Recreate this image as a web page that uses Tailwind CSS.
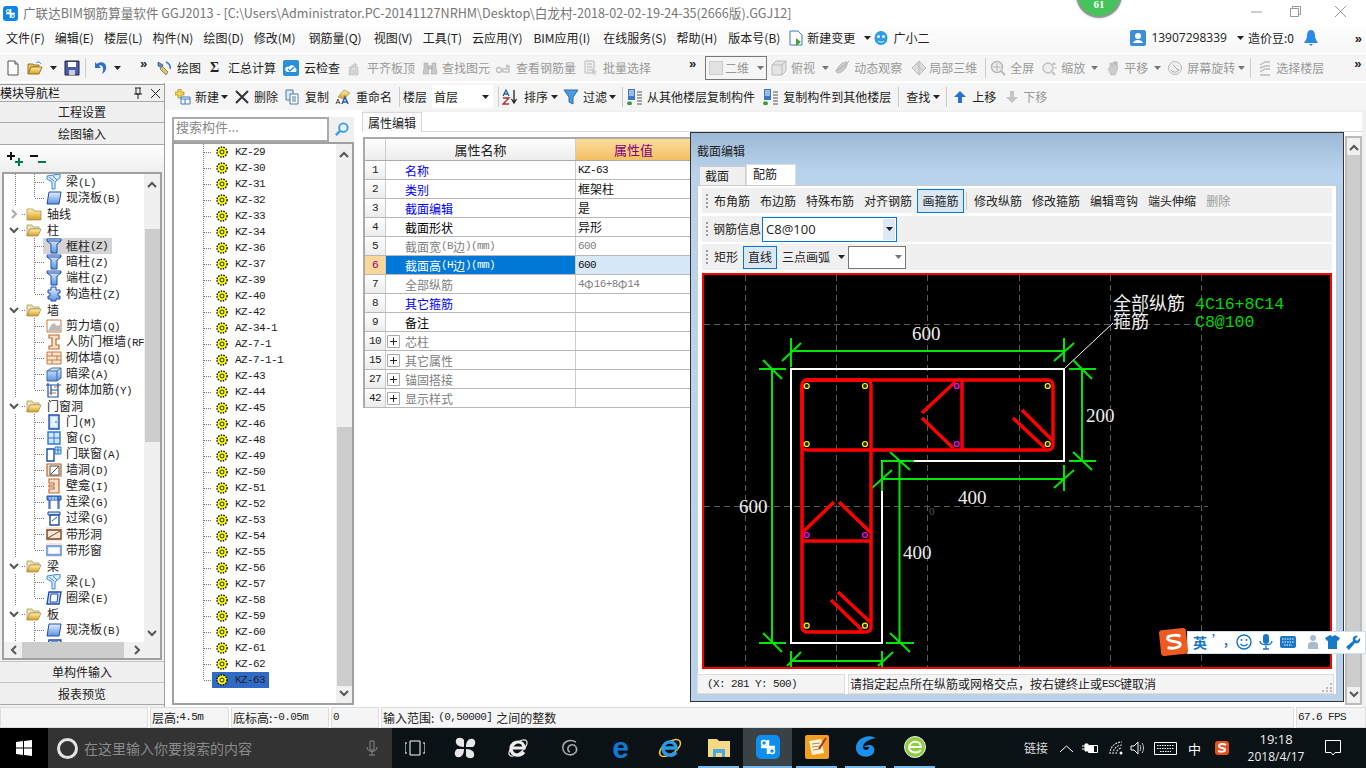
<!DOCTYPE html>
<html lang="zh-CN">
<head>
<meta charset="UTF-8">
<script src="https://cdn.jsdelivr.net/npm/@tailwindcss/browser@4"></script>
<title>GGJ2013</title>
</head>
<body class="w-[1366px] h-[768px] overflow-hidden relative flex flex-col bg-white text-[12px] text-[#222] leading-none font-['Noto_Sans_CJK_SC','Noto_Sans',sans-serif]">

<!-- icon sheet -->
<svg class="absolute w-0 h-0">
  <defs>
    <linearGradient id="gy" x1="0" y1="0" x2="0" y2="1"><stop offset="0" stop-color="#fff3b0"/><stop offset="1" stop-color="#d99a20"/></linearGradient>
    <linearGradient id="gb" x1="0" y1="0" x2="0" y2="1"><stop offset="0" stop-color="#e4f0ff"/><stop offset="1" stop-color="#5b93e0"/></linearGradient>
  </defs>
  <symbol id="c" viewBox="0 0 7 4"><path d="M0 0h7L3.5 4z" fill="#222"/></symbol>
  <symbol id="cg" viewBox="0 0 7 4"><path d="M0 0h7L3.5 4z" fill="#777"/></symbol>
  <symbol id="up" viewBox="0 0 10 7"><path d="M1 6l4-4 4 4" fill="none" stroke="#555" stroke-width="2"/></symbol>
  <symbol id="dn" viewBox="0 0 10 7"><path d="M1 1l4 4 4-4" fill="none" stroke="#555" stroke-width="2"/></symbol>
  <symbol id="lf" viewBox="0 0 7 10"><path d="M6 1L2 5l4 4" fill="none" stroke="#555" stroke-width="2"/></symbol>
  <symbol id="rt" viewBox="0 0 7 10"><path d="M1 1l4 4-4 4" fill="none" stroke="#555" stroke-width="2"/></symbol>
  <!-- toolbar -->
  <symbol id="newdoc" viewBox="0 0 16 16"><path d="M3 1h7l3 3v11H3z" fill="#fff" stroke="#555"/><path d="M10 1v3h3" fill="#ddd" stroke="#555"/></symbol>
  <symbol id="open" viewBox="0 0 16 16"><path d="M1 14V4h5l1 1h5v2H4l-3 7z" fill="#e8c060" stroke="#a07820"/><path d="M1 14l3-7h11l-3 7z" fill="url(#gy)" stroke="#a07820"/><path d="M9 3c2-2 4-1 5 1" fill="none" stroke="#3a78c8"/></symbol>
  <symbol id="save" viewBox="0 0 16 16"><path d="M1 1h14v14H1z" fill="#4a5fb0" stroke="#223"/><path d="M4 2h8v5H4z" fill="#fff"/><path d="M5 10h6v5H5z" fill="#ccd"/></symbol>
  <symbol id="undo" viewBox="0 0 16 16"><path d="M4 3c5-2 9 1 8 6-.5 2-2 4-4 5 1-3 2-6 0-8-1-1-2-1-3 0l2 2H1V2l2 2z" fill="#2e6fc8"/></symbol>
  <symbol id="draw" viewBox="0 0 16 16"><path d="M2 2l5 3-1 3-4-2z" fill="#5c8fd8" stroke="#333" stroke-width=".6"/><path d="M6 6l6 6-2 3-6-6z" fill="#e6c25a" stroke="#555" stroke-width=".6"/><path d="M10 2c3 1 5 4 4 7" fill="none" stroke="#3a78c8" stroke-width="1.5"/></symbol>
  <symbol id="cloud" viewBox="0 0 16 16"><rect x="0" y="0" width="16" height="16" rx="2" fill="#2c8fdb"/><path d="M3 11c-2-2 0-5 3-4 1-3 6-2 6 1 2 0 2 4 0 4H4z" fill="#fff"/><path d="M5 9l2 2 4-4" fill="none" stroke="#2c8fdb" stroke-width="1.4"/></symbol>
  <symbol id="flat" viewBox="0 0 16 16"><path d="M2 8l7-5 3 2-7 5z" fill="#ccc"/><path d="M3 10h5v5H3zM9 7h3v8H9z" fill="#d6d6d6" stroke="#bbb" stroke-width=".6"/></symbol>
  <symbol id="binoc" viewBox="0 0 16 16"><path d="M2 3h4v5l1 6H1l1-6zM10 3h4v5l1 6H9l1-6zM6 6h4v3H6z" fill="#c8c8c8" stroke="#aaa" stroke-width=".6"/></symbol>
  <symbol id="glass" viewBox="0 0 16 16"><circle cx="4" cy="10" r="2.5" fill="none" stroke="#c0c0c0" stroke-width="1.4"/><path d="M11 5l3 1v6h-5c-2 0-2-3 0-3h3V6" fill="none" stroke="#c0c0c0" stroke-width="1.4"/></symbol>
  <symbol id="batch" viewBox="0 0 16 16"><path d="M2 1h9v12H2z" fill="#eee" stroke="#bbb"/><path d="M4 4h5M4 7h5M4 10h5" stroke="#bbb"/><path d="M9 8l5 4-2 1 1 2-1 .6-1-2-2 1z" fill="#ccc"/></symbol>
  <symbol id="cube" viewBox="0 0 16 16"><path d="M1 5l4-4h10v10l-4 4H1z" fill="#e4e4e4" stroke="#bbb"/><path d="M1 5h10v10M11 5l4-4" fill="none" stroke="#bbb"/></symbol>
  <symbol id="orbit" viewBox="0 0 16 16"><path d="M3 13c-1-5 4-11 10-11 1 5-4 11-10 11z" fill="#ccc" stroke="#bbb"/><path d="M1 11c3-1 10-5 14-10" fill="none" stroke="#aaa"/></symbol>
  <symbol id="local" viewBox="0 0 16 16"><path d="M8 1l7 7-7 7-7-7z" fill="#ddd" stroke="#bbb"/><path d="M5 4l7 7M8 1v14" stroke="#bbb"/></symbol>
  <symbol id="zf" viewBox="0 0 16 16"><circle cx="7" cy="7" r="5.5" fill="#eee" stroke="#b5b5b5" stroke-width="1.4"/><path d="M7 3v8M3 7h8" stroke="#b5b5b5"/><path d="M11 11l4 4" stroke="#b5b5b5" stroke-width="2"/></symbol>
  <symbol id="zm" viewBox="0 0 16 16"><circle cx="6" cy="8" r="5" fill="#eee" stroke="#c0c0c0" stroke-width="1.4"/><path d="M10 12l3 3" stroke="#c0c0c0" stroke-width="2"/><path d="M12 2v3M10 4h4M11 8h4" stroke="#bbb"/></symbol>
  <symbol id="pan" viewBox="0 0 16 16"><path d="M5 7V3l2 0v3l1-4h2l0 4 1-2 2 1-1 6-2 4H6L3 9z" fill="#ccc" stroke="#b5b5b5" stroke-width=".6"/><path d="M11 1v4M9 3h4" stroke="#aaa"/></symbol>
  <symbol id="rot" viewBox="0 0 16 16"><circle cx="8" cy="8" r="6.5" fill="#eee" stroke="#bbb"/><path d="M4 10c2 3 7 3 8-1M6 5l5 5" fill="none" stroke="#aaa"/></symbol>
  <symbol id="floor" viewBox="0 0 16 16"><path d="M3 5l5-3h5M3 8l5-2h5M3 12l5-3h5M3 15h10" fill="none" stroke="#bbb" stroke-width="1.4"/></symbol>
  <symbol id="new" viewBox="0 0 16 16"><path d="M3 0h3v3h3v3H6v3H3V6H0V3h3z" fill="#f3d34a" stroke="#997a10" stroke-width=".6"/><path d="M6 8h9v7H6z" fill="#fff" stroke="#3a78c8"/><path d="M6 10h9M10 10v5" stroke="#3a78c8"/></symbol>
  <symbol id="xx" viewBox="0 0 16 16"><path d="M2 2l12 12M14 2L2 14" stroke="#333" stroke-width="2"/></symbol>
  <symbol id="copy" viewBox="0 0 16 16"><path d="M2 1h7v10H2z" fill="#dce9f8" stroke="#4a78b0"/><path d="M6 5h8v10H6z" fill="#fff" stroke="#4a78b0"/><path d="M8 8h4M8 10h4M8 12h4" stroke="#4a78b0"/></symbol>
  <symbol id="filter" viewBox="0 0 16 16"><path d="M1 1h14L10 8v7l-4-2V8z" fill="#4a9be0" stroke="#2a6ab0"/></symbol>
  <symbol id="cfrom" viewBox="0 0 16 16"><path d="M1 0h7v11H1z" fill="#3a78c8"/><path d="M2 2h5M2 4h5M2 6h5" stroke="#fff"/><path d="M1 13h3v3H1zM0 14h5" fill="#3a9a30" stroke="#3a9a30"/><path d="M10 3h5M10 6h5M10 9h5M10 12h5M10 15h5" stroke="#555"/></symbol>
  <symbol id="mup" viewBox="0 0 16 16"><path d="M8 2l6 6h-4v6H6V8H2z" fill="#2a72c8"/></symbol>
  <symbol id="mdn" viewBox="0 0 16 16"><path d="M8 14l6-6h-4V2H6v6H2z" fill="#c4c4c4"/></symbol>
  <symbol id="search" viewBox="0 0 16 16"><circle cx="10" cy="6" r="4.500" fill="#e8f4ff" stroke="#3a9be0" stroke-width="2"/><path d="M6.500 9.500L2 14" stroke="#3a9be0" stroke-width="2.500"/></symbol>
  <!-- tree -->
  <symbol id="fo" viewBox="0 0 16 14"><path d="M1 13V2h5l1 2h6v2H4l-3 7z" fill="#f2e3b0" stroke="#a08a50" stroke-width=".7"/><path d="M1 13l3-7h11l-3 7z" fill="url(#gy)" stroke="#a08a50" stroke-width=".7"/></symbol>
  <symbol id="fc" viewBox="0 0 16 14"><path d="M1 13V2h6l1 2h7v9z" fill="url(#gy)" stroke="#a08a50" stroke-width=".7"/></symbol>
  <symbol id="col" viewBox="0 0 16 16"><path d="M1 1h14v2l-4 3v9H5V6L1 3z" fill="url(#gb)" stroke="#1d4fa8"/><path d="M1 3h14" stroke="#1d4fa8"/></symbol>
  <symbol id="gzz" viewBox="0 0 16 16"><path d="M5 1h5v3h4v3h-2v3h2v3h-4v2H5v-2H2v-3h2V7H2V4h3z" fill="url(#gb)" stroke="#1d4fa8"/></symbol>
  <symbol id="beam" viewBox="0 0 16 16"><path d="M1 2l13-2v4l-5 4v7H6V8L1 5z" fill="#dcecff" stroke="#3a88d8"/><path d="M3 3l5 4M7 2l4 4" stroke="#3a88d8"/></symbol>
  <symbol id="slab" viewBox="0 0 16 16"><path d="M3 2h12l-2 12H1z" fill="url(#gb)" stroke="#1d4fa8"/></symbol>
  <symbol id="ql" viewBox="0 0 16 16"><path d="M3 2h12l-2 12H1z" fill="#cfe2fa" stroke="#1d4fa8" stroke-width="1.400"/><path d="M5 4h7l-1 8H4z" fill="#fff" stroke="#1d4fa8"/></symbol>
  <symbol id="sw" viewBox="0 0 16 16"><path d="M1 2h14v12H1z" fill="#fff" stroke="#c87840"/><path d="M2 13l3-6 3-2 3 3 3-1v6z" fill="#bbb"/></symbol>
  <symbol id="rf" viewBox="0 0 16 16"><path d="M3 1h10v4h-3v6h3v4H3v-3h3V4H3z" fill="#f5e0cc" stroke="#c06a30" stroke-width="1.200"/></symbol>
  <symbol id="brick" viewBox="0 0 16 16"><path d="M1 2h14v12H1z" fill="#f8e4d0" stroke="#c87840"/><path d="M1 6h14M1 10h14M6 2v4M11 6v4M6 10v4" stroke="#c87840"/></symbol>
  <symbol id="anl" viewBox="0 0 16 16"><path d="M1 5l5-3h9v10l-4 3H1z" fill="url(#gb)" stroke="#3a6aa8"/><path d="M1 5h10v10M11 5l4-3" fill="none" stroke="#3a6aa8"/></symbol>
  <symbol id="jj" viewBox="0 0 16 16"><path d="M0 3h15M2 1v14h10V1M12 8H5v5M5 3v5" fill="none" stroke="#1d4fa8" stroke-width="1.200"/><path d="M8 5h5M3 11h7" stroke="#c06a30"/></symbol>
  <symbol id="door" viewBox="0 0 16 16"><path d="M3 1h10v14H3z" fill="#bcd8f8" stroke="#1d4fa8" stroke-width="1.400"/><path d="M5 3h6v10H5z" fill="#e8f2ff"/><circle cx="10" cy="8" r=".8" fill="#1d4fa8"/></symbol>
  <symbol id="win" viewBox="0 0 16 16"><path d="M2 2h12v12H2z" fill="#d2e6fb" stroke="#2a78d8" stroke-width="1.400"/><path d="M8 2v12M2 8h12" stroke="#2a78d8"/></symbol>
  <symbol id="dlc" viewBox="0 0 16 16"><path d="M1 3h7v12H1z" fill="#fff" stroke="#1d4fa8" stroke-width="1.400"/><path d="M9 1h6v7H9z" fill="#cfe2fa" stroke="#2a78d8"/><path d="M12 1v7M9 4h6" stroke="#2a78d8"/></symbol>
  <symbol id="hole" viewBox="0 0 16 16"><path d="M1 2h14v12H1z" fill="#f8e4d0" stroke="#b06a38" stroke-width="1.200"/><path d="M4 4h9v9H4z" fill="#fff" stroke="#555"/><path d="M4 13l9-9" stroke="#555"/></symbol>
  <symbol id="nic" viewBox="0 0 16 16"><path d="M3 1h10v14H3v-4h5V9H3V7h5V5H3z" fill="#f5e0cc" stroke="#c06a30" stroke-width="1.200"/></symbol>
  <symbol id="ll" viewBox="0 0 16 16"><path d="M1 2h14v4H1z" fill="#5b93e0" stroke="#1d4fa8"/><path d="M4 2v13M12 2v13M3 6v9M13 6v9" stroke="#1d4fa8"/><path d="M4 3v3M7 3v3M10 3v3" stroke="#fff"/></symbol>
  <symbol id="gl" viewBox="0 0 16 16"><path d="M2 2h12v3H2z" fill="#cfe2fa" stroke="#1d4fa8"/><path d="M4 5h9v10H4z" fill="#fff" stroke="#1d4fa8" stroke-width="1.400"/><path d="M6 11l5-4" stroke="#1d4fa8"/></symbol>
  <symbol id="bh" viewBox="0 0 16 16"><path d="M0 1h16v14H0z" fill="#fbe4dc"/><path d="M1 4h14v9H1z" fill="#f6e6d8" stroke="#7a4a20" stroke-width="1.400"/><path d="M2 12l12-7" stroke="#7a4a20"/></symbol>
  <symbol id="bc" viewBox="0 0 16 16"><path d="M0 1h16v14H0z" fill="#fbe4dc"/><path d="M1 4h14v9H1z" fill="#dce9fb" stroke="#5b8be0" stroke-width="1.400"/><path d="M3 6h10v5H3z" fill="#fff"/></symbol>
  <symbol id="gear" viewBox="0 0 12 12"><circle cx="6" cy="6" r="5" fill="#ff0" stroke="#111" stroke-width="1.500" stroke-dasharray="1.500 1.200"/><circle cx="6" cy="6" r="3.800" fill="#ff0"/><circle cx="6" cy="6" r="2" fill="#ff0" stroke="#222"/></symbol>
</svg>

<!-- title bar -->
<div class="h-[23px] flex items-center shrink-0 bg-white relative">
  <svg class="w-[15px] h-[15px] ml-[3px] mt-1" viewBox="0 0 15 15"><rect width="15" height="15" rx="3" fill="#0e86e8"/><path d="M7.500 3v9M3 7.500h9" stroke="#fff" stroke-width="1.600"/><circle cx="5" cy="5" r="1.500" fill="none" stroke="#fff"/><circle cx="10" cy="10" r="1.500" fill="none" stroke="#fff"/></svg>
  <span class="ml-[5px] mt-1 text-[#767676] text-[12.6px] whitespace-nowrap">广联达BIM钢筋算量软件 GGJ2013 - [C:\Users\Administrator.PC-20141127NRHM\Desktop\白龙村-2018-02-02-19-24-35(2666版).GGJ12]</span>
  <div class="ml-auto flex items-center">
    <svg class="w-[11px] h-[11px]" viewBox="0 0 11 11"><path d="M0 6h11" stroke="#999"/></svg>
    <svg class="w-[11px] h-[11px] ml-[28px]" viewBox="0 0 11 11"><path d="M.5 2.500h8v8h-8zM2.500 2.500V.5h8v8h-2" fill="none" stroke="#999"/></svg>
    <svg class="w-[11px] h-[11px] ml-[34px] mr-[20px]" viewBox="0 0 11 11"><path d="M0 0l11 11M11 0L0 11" stroke="#999"/></svg>
  </div>
</div>
<!-- green badge over the window edge -->
<div class="absolute left-[1076px] top-[-28px] w-[46px] h-[46px] rounded-full bg-[#45c35c] border-2 border-[#8f9a92] shadow flex items-end justify-center pb-[6px] text-white font-bold text-[11px] font-['Liberation_Serif',serif]">61</div>

<!-- menu bar -->
<div class="h-[30px] flex items-center shrink-0 pl-[6px] gap-[10px] bg-gradient-to-b from-white to-[#f6f6f6] text-[#222] whitespace-nowrap">
  <span>文件(F)</span><span>编辑(E)</span><span>楼层(L)</span><span>构件(N)</span><span>绘图(D)</span><span>修改(M)</span><span class="ml-[3px]">钢筋量(Q)</span><span class="ml-[2px]">视图(V)</span><span>工具(T)</span><span>云应用(Y)</span><span class="ml-px">BIM应用(I)</span><span class="ml-[3px]">在线服务(S)</span><span>帮助(H)</span><span class="ml-px">版本号(B)</span>
  <svg class="w-4 h-4 shrink-0 -ml-[2px]" viewBox="0 0 16 16"><path d="M2 1h8l4 4v10H2z" fill="#fff" stroke="#3a78c8"/><path d="M8 8l5 4-5 4z" fill="#4aa030"/></svg>
  <span class="-ml-[7px]">新建变更</span>
  <svg class="w-[7px] h-1 -ml-[1px]"><use href="#c"/></svg>
  <svg class="w-4 h-4 shrink-0 -ml-[8px]" viewBox="0 0 16 16"><ellipse cx="8" cy="8" rx="6.500" ry="7" fill="#2a9ce8"/><circle cx="5.500" cy="6.500" r="1.500" fill="#fff"/><circle cx="10.500" cy="6.500" r="1.500" fill="#fff"/><path d="M5 11c2 1.500 4 1.500 6 0" fill="none" stroke="#fff"/></svg>
  <span class="-ml-[6px]">广小二</span>
  <svg class="w-4 h-4 ml-[191px] shrink-0" viewBox="0 0 16 16"><rect width="16" height="16" rx="2" fill="#3a8fd8"/><circle cx="8" cy="6" r="3" fill="#fff"/><path d="M3 13c1-4 9-4 10 0z" fill="#fff"/></svg>
  <span class="-ml-[5px] font-['Open_Sans','Noto_Sans',sans-serif]">13907298339</span>
  <svg class="w-[7px] h-1"><use href="#c"/></svg>
  <span class="-ml-[6px]">造价豆:0</span>
  <svg class="w-[14px] h-[16px]" viewBox="0 0 14 16"><path d="M7 0c3 0 4 3 4 6 0 3 2 5 3 7H0c1-2 3-4 3-7 0-3 1-6 4-6z" fill="#2a8ae8"/><path d="M5 14h4l-2 2z" fill="#2a8ae8"/></svg>
  <span class="ml-auto mr-[4px] font-bold text-[13px] font-['Liberation_Sans']">»</span>
</div>

<!-- toolbar one -->
<div class="h-[27px] flex items-center shrink-0 bg-[#f5f5f5] whitespace-nowrap text-[#222] mt-[1px]">
  <svg class="w-4 h-4 ml-[5px] shrink-0"><use href="#newdoc"/></svg>
  <svg class="w-4 h-4 ml-[6px] shrink-0"><use href="#open"/></svg>
  <svg class="w-[7px] h-1 ml-[7px] shrink-0"><use href="#c"/></svg>
  <svg class="w-4 h-4 ml-[7px] shrink-0"><use href="#save"/></svg>
  <i class="w-px h-5 ml-[5px] bg-[#ccc] shrink-0"></i>
  <svg class="w-4 h-4 ml-[8px] shrink-0"><use href="#undo"/></svg>
  <svg class="w-[7px] h-1 ml-[4px] shrink-0"><use href="#c"/></svg>
  <b class="w-2 ml-[19px] -mt-2 font-['Liberation_Sans'] text-[13px]">»</b>
  <svg class="w-4 h-4 ml-[8px] shrink-0"><use href="#draw"/></svg>
  <span class="ml-[5px]">绘图</span>
  <b class="w-[10px] ml-[9px] text-[14px] font-['Liberation_Serif']">Σ</b>
  <span class="ml-[8px]">汇总计算</span>
  <svg class="w-4 h-4 ml-[7px] shrink-0"><use href="#cloud"/></svg>
  <span class="ml-[5px]">云检查</span>
  <svg class="w-4 h-4 ml-[6px] shrink-0"><use href="#flat"/></svg>
  <span class="ml-[5px] text-[#999]">平齐板顶</span>
  <svg class="w-4 h-4 ml-[7px] shrink-0"><use href="#binoc"/></svg>
  <span class="ml-[4px] text-[#999]">查找图元</span>
  <svg class="w-4 h-4 ml-[5px] shrink-0"><use href="#glass"/></svg>
  <span class="ml-[5px] text-[#999]">查看钢筋量</span>
  <svg class="w-4 h-4 ml-[7px] shrink-0"><use href="#batch"/></svg>
  <span class="ml-[4px] text-[#999]">批量选择</span>
  <b class="w-2 ml-[38px] -mt-2 font-['Liberation_Sans'] text-[13px]">»</b>
  <div class="w-[62px] h-6 ml-[8px] border border-[#777] flex items-center pl-[3px] text-[#999] shrink-0">
    <i class="w-[14px] h-[14px] bg-[#e2e2e2] border border-[#ccc]"></i><span class="ml-[2px]">二维</span>
    <svg class="w-[7px] h-1 ml-[8px]"><use href="#cg"/></svg>
  </div>
  <svg class="w-4 h-4 ml-[4px] shrink-0"><use href="#cube"/></svg>
  <span class="ml-[4px] text-[#999]">俯视</span>
  <svg class="w-[7px] h-1 ml-[7px] shrink-0"><use href="#cg"/></svg>
  <svg class="w-4 h-4 ml-[5px] shrink-0"><use href="#orbit"/></svg>
  <span class="ml-[4px] text-[#999]">动态观察</span>
  <svg class="w-4 h-4 ml-[9px] shrink-0"><use href="#local"/></svg>
  <span class="ml-[2px] text-[#999]">局部三维</span>
  <i class="w-px h-5 ml-[8px] bg-[#ccc] shrink-0"></i>
  <svg class="w-4 h-4 ml-[4px] shrink-0"><use href="#zf"/></svg>
  <span class="ml-[4px] text-[#999]">全屏</span>
  <svg class="w-4 h-4 ml-[8px] shrink-0"><use href="#zm"/></svg>
  <span class="ml-[3px] text-[#999]">缩放</span>
  <svg class="w-[7px] h-1 ml-[6px] shrink-0"><use href="#cg"/></svg>
  <svg class="w-4 h-4 ml-[7px] shrink-0"><use href="#pan"/></svg>
  <span class="ml-[3px] text-[#999]">平移</span>
  <svg class="w-[7px] h-1 ml-[6px] shrink-0"><use href="#cg"/></svg>
  <svg class="w-4 h-4 ml-[6px] shrink-0"><use href="#rot"/></svg>
  <span class="ml-[4px] text-[#999]">屏幕旋转</span>
  <svg class="w-[7px] h-1 ml-[3px] shrink-0"><use href="#cg"/></svg>
  <i class="w-px h-5 ml-[5px] bg-[#ccc] shrink-0"></i>
  <svg class="w-4 h-4 ml-[6px] shrink-0"><use href="#floor"/></svg>
  <span class="ml-[3px] text-[#999]">选择楼层</span>
  <b class="w-2 ml-[30px] -mt-2 font-['Liberation_Sans'] text-[13px]">»</b>
</div>

<!-- work area -->
<div class="flex-1 min-h-0 flex mt-[2px]">

  <!-- module navigator -->
  <div class="w-[165px] shrink-0 flex flex-col pt-px pb-[2px] bg-[#f0f0f0] border-r border-[#a0a0a0]">
    <div class="h-[17px] flex items-center border-t border-[#999] shrink-0 text-[#111]">
      <span>模块导航栏</span>
      <svg class="w-[10px] h-3 ml-auto" viewBox="0 0 10 12"><path d="M2 1h6M3 1v6h4V1M1 7h8M5 7v5" fill="none" stroke="#222"/></svg>
      <svg class="w-[9px] h-[9px] ml-[8px] mr-[4px]" viewBox="0 0 9 9"><path d="M0 0l9 9M9 0L0 9" stroke="#222"/></svg>
    </div>
    <div class="h-[22px] shrink-0 flex items-center justify-center border-y border-[#a8a8a8]">工程设置</div>
    <div class="h-[22px] shrink-0 flex items-center justify-center border-b border-[#a8a8a8]">绘图输入</div>
    <div class="h-[27px] shrink-0 flex items-center pl-[7px] gap-[6px] bg-gradient-to-b from-white to-[#eee]">
      <svg class="w-4 h-[14px]" viewBox="0 0 16 14"><path d="M0 4h8M4 0v8" stroke="#111" stroke-width="2"/><path d="M8 10h8M12 6v8" stroke="#074" stroke-width="2"/></svg>
      <svg class="w-4 h-[14px] ml-px" viewBox="0 0 16 14"><path d="M0 4h8" stroke="#111" stroke-width="2"/><path d="M8 10h8" stroke="#074" stroke-width="2"/></svg>
    </div>
    <div class="flex-1 min-h-0 mx-[2px] border-2 border-[#a0a0a0] bg-white flex flex-col">
      <div class="flex-1 min-h-0 flex">
        <div id="tree" class="flex-1 min-w-0 overflow-hidden whitespace-nowrap -ml-px"></div>
        <div class="w-[16px] shrink-0 bg-[#f0f0f0] flex flex-col items-center">
          <svg class="w-[10px] h-[7px] mt-[7px] shrink-0"><use href="#up"/></svg>
          <div class="w-[15px] h-[213px] mt-[41px] bg-[#cdcdcd] shrink-0"></div>
          <svg class="w-[10px] h-[7px] mt-auto mb-[5px] shrink-0"><use href="#dn"/></svg>
        </div>
      </div>
      <div class="h-[16px] shrink-0 bg-[#f0f0f0] flex items-center">
        <svg class="w-[7px] h-[10px] ml-[6px]"><use href="#lf"/></svg>
        <div class="w-[102px] h-full ml-[5px] bg-[#cdcdcd]"></div>
        <svg class="w-[7px] h-[10px] ml-[10px]"><use href="#rt"/></svg>
      </div>
    </div>
    <div class="h-[22px] shrink-0 mt-px flex items-center justify-center border-y border-[#c4c4c4]">单构件输入</div>
    <div class="h-[22px] shrink-0 flex items-center justify-center border-b border-[#a8a8a8]">报表预览</div>
  </div>

  <div class="flex-1 min-w-0 flex flex-col">
    <!-- toolbar two -->
    <div class="h-[27px] shrink-0 flex items-center bg-[#f5f5f5] whitespace-nowrap">
      <svg class="w-4 h-4 ml-[10px] shrink-0"><use href="#new"/></svg>
      <span class="ml-[4px]">新建</span>
      <svg class="w-[7px] h-1 ml-[2px] shrink-0"><use href="#c"/></svg>
      <svg class="w-4 h-4 ml-[6px] shrink-0"><use href="#xx"/></svg>
      <span class="ml-[4px]">删除</span>
      <svg class="w-4 h-4 ml-[6px] shrink-0"><use href="#copy"/></svg>
      <span class="ml-[5px]">复制</span>
      <svg class="w-4 h-4 ml-[6px] shrink-0" viewBox="0 0 16 16"><path d="M3 8l6-7 6 3-6 6z" fill="url(#gy)" stroke="#997a30" stroke-width=".6"/><path d="M1 15l2-5 2 5M2 13.500h2" fill="none" stroke="#555"/><path d="M7 15l3-7 3 7M8 13h4" fill="none" stroke="#2c5ca8" stroke-width="1.500"/></svg>
      <span class="ml-[5px]">重命名</span>
      <i class="w-px h-5 ml-[7px] bg-[#ccc] shrink-0"></i>
      <span class="ml-[3px]">楼层</span>
      <div class="w-[61px] h-[23px] ml-[5px] bg-white flex items-center pl-[2px] pr-[4px] shrink-0">首层<svg class="w-[7px] h-1 ml-auto"><use href="#c"/></svg></div>
      <i class="w-px h-5 ml-[5px] bg-[#ccc] shrink-0"></i>
      <svg class="w-4 h-4 ml-[3px] shrink-0" viewBox="0 0 16 16"><path d="M1 7l3-6 3 6M2 5h4" fill="none" stroke="#2c5ca8" stroke-width="1.300"/><path d="M1 9h6l-6 6h6" fill="none" stroke="#b03030" stroke-width="1.300"/><path d="M12 1v12M9.500 10l2.500 4 2.500-4" fill="none" stroke="#222" stroke-width="1.300"/></svg>
      <span class="ml-[6px]">排序</span>
      <svg class="w-[7px] h-1 ml-[3px] shrink-0"><use href="#c"/></svg>
      <svg class="w-4 h-4 ml-[5px] shrink-0"><use href="#filter"/></svg>
      <span class="ml-[4px]">过滤</span>
      <svg class="w-[7px] h-1 ml-[2px] shrink-0"><use href="#c"/></svg>
      <i class="w-px h-5 ml-[6px] bg-[#ccc] shrink-0"></i>
      <svg class="w-4 h-4 ml-[4px] shrink-0"><use href="#cfrom"/></svg>
      <span class="ml-[4px]">从其他楼层复制构件</span>
      <svg class="w-4 h-4 ml-[8px] shrink-0"><use href="#cfrom"/></svg>
      <span class="ml-[4px]">复制构件到其他楼层</span>
      <i class="w-px h-5 ml-[7px] bg-[#ccc] shrink-0"></i>
      <span class="ml-[7px]">查找</span>
      <svg class="w-[7px] h-1 ml-[3px] shrink-0"><use href="#c"/></svg>
      <i class="w-px h-5 ml-[6px] bg-[#ccc] shrink-0"></i>
      <svg class="w-4 h-4 ml-[5px] shrink-0"><use href="#mup"/></svg>
      <span class="ml-[4px]">上移</span>
      <svg class="w-4 h-4 ml-[8px] shrink-0"><use href="#mdn"/></svg>
      <span class="ml-[3px] text-[#999]">下移</span>
    </div>

    <div class="flex-1 min-h-0 flex">
      <!-- component list -->
      <div class="w-[189px] shrink-0 pl-[7px] pt-[7px] pb-[2px] flex flex-col">
        <div class="h-[25px] shrink-0 flex bg-[#f0f0f0]">
          <div class="w-[157px] border-2 border-[#aaa] bg-white flex items-center pl-[2px] pb-[6px] text-[13px] text-[#888]">搜索构件...</div>
          <svg class="w-[15px] h-[15px] ml-[5px] mt-[5px]"><use href="#search"/></svg>
        </div>
        <div class="flex-1 min-h-0 border-2 border-[#a0a0a0] bg-white flex">
          <div id="kz" class="flex-1 min-w-0 overflow-hidden"></div>
          <div class="w-[16px] shrink-0 bg-[#f0f0f0] flex flex-col items-center">
            <svg class="w-[10px] h-[7px] mt-[7px] shrink-0"><use href="#up"/></svg>
            <div class="w-[15px] h-[259px] mt-[269px] bg-[#cdcdcd] shrink-0"></div>
            <svg class="w-[10px] h-[7px] mt-auto mb-[6px] shrink-0"><use href="#dn"/></svg>
          </div>
        </div>
      </div>
      <!-- property editor -->
      <div class="flex-1 min-w-0 pl-[8px] flex flex-col">
        <div class="h-[22px] shrink-0 flex items-end border-t-2 border-[#f0f0f0]">
          <div class="w-[60px] h-[20px] flex items-center justify-center bg-[#fafafa] border border-b-0 border-[#d8d8d8]">属性编辑</div>
          <div class="flex-1 border-b border-[#d8d8d8]"></div>
        </div>
        <div class="flex-1 min-h-0 flex">
          <div id="props" class="w-[328px] mt-[5px] ml-px self-start border-t-2 border-l-2 border-[#aaa]"></div>
          <div class="ml-auto w-[17px] mt-[4px] mb-[2px] border-2 border-[#bbb] bg-[#f0f0f0] flex flex-col items-center">
            <svg class="w-[10px] h-[7px] mt-[6px] shrink-0"><use href="#up"/></svg>
            <div class="flex-1 w-full mt-[4px] mb-[4px] bg-[#cdcdcd]"></div>
            <svg class="w-[10px] h-[7px] mb-[5px] shrink-0"><use href="#dn"/></svg>
          </div>
        </div>
      </div>
      <div class="w-[4px] shrink-0 bg-[#f0f0f0]"></div>
    </div>
  </div>
</div>

<!-- status bar -->
<div class="h-[21px] shrink-0 flex gap-[2px] bg-white">
  <div class="w-[148px] bg-[#f5f5f5] border border-[#ddd]"></div>
  <div class="w-[79px] bg-[#f5f5f5] border border-[#ddd] flex items-center pl-px">层高:<span class="font-['Liberation_Mono'] text-[11px] tracking-[-0.6px]">4.5m</span></div>
  <div class="w-[98px] bg-[#f5f5f5] border border-[#ddd] flex items-center pl-px">底标高:<span class="font-['Liberation_Mono'] text-[11px] tracking-[-0.6px]">-0.05m</span></div>
  <div class="w-[48px] bg-[#f5f5f5] border border-[#ddd] flex items-center pl-px font-['Liberation_Mono'] text-[11px]">0</div>
  <div class="flex-1 bg-[#f5f5f5] border border-[#ddd] flex items-center pl-px">输入范围: <span class="font-['Liberation_Mono'] text-[11px] tracking-[-0.6px] mx-[4px]">(0,50000]</span>之间的整数</div>
  <div class="w-[70px] bg-[#f5f5f5] border border-[#ddd] flex items-center pl-px font-['Liberation_Mono'] text-[11px] tracking-[-0.6px]">67.6 FPS</div>
</div>

<!-- taskbar -->
<div class="h-[40px] shrink-0 flex items-center bg-[#0b1216] text-white">
  <div class="w-[48px] h-full bg-black flex items-center justify-center">
    <svg class="w-4 h-4" viewBox="0 0 16 16"><path d="M0 2l7-1v6.500H0zM8 1l8-1v7.500H8zM0 8.500h7V15l-7-1zM8 8.500h8V16l-8-1z" fill="#fff"/></svg>
  </div>
  <div class="w-[344px] h-full bg-[#333] flex items-center">
    <i class="w-[21px] h-[21px] ml-[9px] rounded-full border-[3px] border-[#e4e4e4]"></i>
    <span class="ml-[6px] text-[14px] text-[#8a8a8a]">在这里输入你要搜索的内容</span>
    <svg class="w-[12px] h-[16px] ml-auto mr-[14px]" viewBox="0 0 12 16"><path d="M4 1h4v9H4zM1 7c0 6 10 6 10 0M6 12v3M3 15h6" fill="none" stroke="#888"/></svg>
  </div>
  <div class="w-[46px] h-full flex items-center justify-center"><svg class="w-5 h-4" viewBox="0 0 20 16"><path d="M5 1h10v14H5zM2 3H0v10h2M18 3h2v10h-2" fill="none" stroke="#fff"/></svg></div>
  <div class="w-[54px] h-full flex items-center justify-center"><svg class="w-[22px] h-[22px]" viewBox="0 0 22 22"><path d="M10 10C4 10 1 7 2 3c1-3 6-3 8 0zM12 10c0-6 3-9 7-8 3 1 3 6 0 8zM12 12c6 0 9 3 8 7-1 3-6 3-8 0zM10 12c0 6-3 9-7 8-3-1-3-6 0-8z" fill="#e8e8e8"/></svg></div>
  <div class="w-[51px] h-full flex items-center justify-center"><svg class="w-[24px] h-[24px]" viewBox="0 0 24 24"><ellipse cx="12" cy="12" rx="11" ry="5" transform="rotate(-40 12 12)" fill="none" stroke="#eee" stroke-width="1.200"/><path d="M5 12h13c0-8-12-8-13 0 0 8 9 9 13 4" fill="none" stroke="#eee" stroke-width="3.200"/></svg></div>
  <div class="w-[53px] h-full flex items-center justify-center"><svg class="w-5 h-5" viewBox="0 0 20 20"><path d="M16 4C8 0 2 5 3 11c1 6 9 8 13 3 2-4-1-8-5-7-4 1-4 6-1 7" fill="none" stroke="#aaa" stroke-width="1.500"/></svg></div>
  <div class="w-[49px] h-full flex items-center justify-center"><span class="text-[30px] font-bold font-['Liberation_Sans'] text-[#0f78d4]">e</span></div>
  <div class="w-[49px] h-full flex items-center justify-center"><svg class="w-[26px] h-[26px]" viewBox="0 0 26 26"><ellipse cx="13" cy="13" rx="12" ry="6" transform="rotate(-35 13 13)" fill="none" stroke="#f2c83c" stroke-width="1.500"/><path d="M6 13h13c0-8-12-8-13 0 0 8 10 9 13 4" fill="none" stroke="#2a9ae8" stroke-width="3.500"/></svg></div>
  <div class="w-[49px] h-full flex flex-col items-center"><div class="flex-1 flex items-center"><svg class="w-[22px] h-5" viewBox="0 0 22 20"><path d="M0 2h9l2 2h11v16H0z" fill="#f3d984"/><path d="M5 12h12v8h-3v-4H8v4H5z" fill="#49a8e8"/></svg></div><i class="w-[41px] h-[2px] bg-[#76b9ed]"></i></div>
  <div class="w-[49px] h-full flex flex-col items-center bg-[#3a4246]"><div class="flex-1 flex items-center"><svg class="w-6 h-6" viewBox="0 0 24 24"><rect width="24" height="24" rx="5" fill="#0e8ff0"/><path d="M12 5v14M5 12h14" stroke="#fff" stroke-width="2.500"/><circle cx="8" cy="8" r="2.500" fill="none" stroke="#fff" stroke-width="1.500"/><circle cx="16" cy="16" r="2.500" fill="none" stroke="#fff" stroke-width="1.500"/></svg></div><i class="w-full h-[2px] bg-[#76b9ed]"></i></div>
  <div class="w-[49px] h-full flex flex-col items-center"><div class="flex-1 flex items-center"><svg class="w-6 h-6" viewBox="0 0 24 24"><rect width="24" height="24" rx="2" fill="#f0a020"/><path d="M4 6l12-2 3 14-12 2z" fill="#fff3d0"/><path d="M7 9l8-1M7 12l8-1M8 15l6-1" stroke="#a86"/><path d="M14 14l7-11" stroke="#b03020" stroke-width="2"/></svg></div><i class="w-[41px] h-[2px] bg-[#76b9ed]"></i></div>
  <div class="w-[49px] h-full flex flex-col items-center"><div class="flex-1 flex items-center"><svg class="w-6 h-6" viewBox="0 0 24 24"><path d="M22 3C12-2 1 5 2 14c1 8 12 10 17 5 3-4 1-9-4-9-2 0-4 1-5 2h5c0 4-6 4-6 0 0-5 7-8 13-9z" fill="#1c8fe8"/></svg></div><i class="w-[41px] h-[2px] bg-[#76b9ed]"></i></div>
  <div class="w-[49px] h-full flex flex-col items-center"><div class="flex-1 flex items-center"><svg class="w-[22px] h-[22px]" viewBox="0 0 22 22"><circle cx="11" cy="11" r="10.500" fill="#8ccf3a" stroke="#eef" stroke-width="1"/><path d="M5 11h12c0-7-11-7-12 0 0 6 9 7 12 3" fill="none" stroke="#fff" stroke-width="2"/></svg></div><i class="w-[41px] h-[2px] bg-[#76b9ed]"></i></div>
  <span class="ml-[85px] text-[#ddd]">链接</span>
  <svg class="w-[13px] h-[7px] ml-[12px]" viewBox="0 0 13 7"><path d="M0 7l6.500-6L13 7" fill="none" stroke="#fff"/></svg>
  <svg class="w-[16px] h-[11px] ml-[9px]" viewBox="0 0 16 11"><path d="M0 3h3M0 6h3M3 1h3v7H3z" stroke="#fff" fill="#fff"/><path d="M6.500 2.500h9v7h-9z" fill="none" stroke="#fff"/><path d="M7 3h5v6H7z" fill="#fff"/></svg>
  <svg class="w-[14px] h-[14px] ml-[11px]" viewBox="0 0 14 14"><path d="M1 13C1 6 6 1 13 1M4 13c0-5 4-9 9-9M7 13c0-3 3-6 6-6" fill="none" stroke="#ccc" stroke-width="1.200" stroke-dasharray="2 1"/><circle cx="12" cy="12" r="1.500" fill="#fff"/></svg>
  <svg class="w-[16px] h-[14px] ml-[7px]" viewBox="0 0 16 14"><path d="M1 5h3l4-4v12l-4-4H1z" fill="none" stroke="#fff"/><path d="M10 4c1 2 1 4 0 6M12 2c2 3 2 7 0 10" fill="none" stroke="#ccc"/></svg>
  <svg class="w-[23px] h-[13px] ml-[8px]" viewBox="0 0 23 13"><path d="M.5.500h22v12H.5z" fill="none" stroke="#fff"/><path d="M3 3.500h17M3 6.500h17M6 9.500h11" stroke="#fff" stroke-dasharray="1.500 1"/></svg>
  <span class="ml-[11px] text-[13px]">中</span>
  <svg class="w-4 h-4 ml-[13px]" viewBox="0 0 16 16"><rect x="1" y="1" width="14" height="14" rx="3" fill="#e8501e"/><path d="M12 5c-3-2-7-1-7 1 0 3 6 1 6 4 0 2-4 2-7 1" fill="none" stroke="#fff" stroke-width="2"/></svg>
  <div class="ml-[13px] w-[66px] text-center text-[#eee]"><div class="mb-[5px] text-[13px] font-['Open_Sans',sans-serif]">19:18</div><div class="text-[12px] font-['Open_Sans',sans-serif]">2018/4/17</div></div>
  <svg class="w-4 h-4 ml-[16px]" viewBox="0 0 16 16"><path d="M.5.500h15v12H10L8 15l-2-2.500H.5z" fill="none" stroke="#fff"/></svg>
</div>

<!-- floating section editor window -->
<div class="absolute left-[690px] top-[132px] w-[654px] h-[570px] border border-[#333] bg-gradient-to-b from-[#9db9d8] to-[#b9d3ec] to-[7%] flex flex-col pl-[6px] pr-[6px] pb-[6px]">
  <div class="h-[31px] shrink-0 flex items-center pt-[5px]">截面编辑</div>
  <div class="h-[21px] shrink-0 flex items-end pl-[2px]">
    <div class="w-[47px] h-[19px] flex items-center pl-[5px] bg-[#f0f0f0] border border-[#ccc] border-b-0">截面</div>
    <div class="w-[50px] h-[21px] flex items-center pl-[6px] pb-[3px] bg-white border-x border-t border-[#ddd]">配筋</div>
  </div>
  <div class="flex-1 min-h-0 bg-white border border-[#ccc] flex flex-col px-[4px] pt-[2px]">
    <div class="h-[25px] shrink-0 flex items-center bg-[#f0f0f0] gap-[10px] pl-[4px]">
      <i class="w-[2px] h-[14px] border-l-2 border-dotted border-[#999] -mr-[4px]"></i>
      <span>布角筋</span><span>布边筋</span><span>特殊布筋</span><span>对齐钢筋</span>
      <span class="-ml-[5px] -mr-[8px] w-[47px] h-[24px] flex items-center justify-center bg-[#dbe8f4] border border-[#0078d7]">画箍筋</span>
      <i class="w-px h-[18px] bg-[#ccc] -mr-[3px]"></i>
      <span>修改纵筋</span><span>修改箍筋</span><span>编辑弯钩</span><span>端头伸缩</span><span class="text-[#999]">删除</span>
    </div>
    <div class="h-[26px] shrink-0 flex items-center bg-[#f0f0f0] pl-[4px] mt-[3px]">
      <i class="w-[2px] h-[14px] border-l-2 border-dotted border-[#999]"></i>
      <span class="ml-[5px]">钢筋信息</span>
      <div class="w-[135px] h-[25px] ml-px border border-[#0078d7] bg-white flex items-center pl-[3px] text-[13px] font-['Open_Sans',sans-serif]">C8@100
        <div class="ml-auto mr-px w-[12px] h-[21px] bg-[#dce8f3] flex items-center justify-center"><svg class="w-[7px] h-1"><use href="#c"/></svg></div>
      </div>
    </div>
    <div class="h-[26px] shrink-0 flex items-center bg-[#f0f0f0] pl-[4px] mt-[2px]">
      <i class="w-[2px] h-[14px] border-l-2 border-dotted border-[#999]"></i>
      <span class="ml-[6px]">矩形</span>
      <span class="ml-[5px] w-[34px] h-[23px] flex items-center justify-center bg-[#dbe8f4] border border-[#0078d7]">直线</span>
      <span class="ml-[5px]">三点画弧</span>
      <svg class="w-[7px] h-1 ml-[8px]"><use href="#c"/></svg>
      <div class="w-[58px] h-[23px] ml-[3px] border border-[#777] bg-white flex items-center justify-end pr-[3px]"><svg class="w-[7px] h-1"><use href="#cg"/></svg></div>
    </div>
    <!-- section drawing -->
    <svg class="w-[630px] h-[396px] mt-[3px] shrink-0 bg-black" viewBox="702 273 630 396" font-family="Liberation Serif">
      <g stroke="#5a5a5a" stroke-dasharray="6 4" stroke-width="1">
        <path d="M745.500 275V667M836.500 275V667M927.500 275V667M1019.500 275V667M1110.500 275V667M1201.500 275V667M704 324.500H1202M704 506.500H1208"/>
      </g>
      <rect x="703" y="274" width="628" height="394" fill="none" stroke="#f00" stroke-width="2"/>
      <text x="929" y="515" font-size="11" fill="#555">0</text>
      <path d="M791 369H1064V461H882V643H791Z" fill="none" stroke="#fff" stroke-width="2"/>
      <path d="M1113 323L1065 368" stroke="#fff"/>
      <g fill="none" stroke="#00e600" stroke-width="2">
        <path d="M791 351H1064M791 338V367M1064 338V362M782 361L801 343M1054 361L1074 343"/>
        <path d="M772 369V643M759 369H786M759 643H786M763 360L782 379M763 633L782 652"/>
        <path d="M1082 369V461M1069 369H1096M1069 461H1096M1073 360L1092 379M1073 452L1092 470"/>
        <path d="M882 479H1064M882 461V491M1064 465V491M872 488L892 470M1054 488L1074 470"/>
        <path d="M899.500 461V643M882 461H914M886 643H914M890 452L910 470M890 633L910 652"/>
        <path d="M791 661H882M791 651V667M882 651V667M787 666L801 652M878 666L893 652"/>
      </g>
      <g fill="none" stroke="#f00" stroke-width="3.500" stroke-linecap="butt">
        <rect x="802" y="380" width="251" height="70" rx="5"/>
        <rect x="802" y="380" width="69" height="252" rx="5"/>
        <path d="M962 380V450M802 541H871"/>
        <path d="M955 382L922 413M922 418L953 448M1022 410L1052 440M1013 418L1045 448"/>
        <path d="M834 502L803 532M839 502L870 532M838 592L870 622M831 600L862 630"/>
      </g>
      <g fill="#222" stroke-width="1.200">
        <g stroke="#ff0"><circle cx="806.700" cy="386" r="2.500"/><circle cx="865" cy="386" r="2.500"/><circle cx="806.700" cy="444" r="2.500"/><circle cx="865" cy="444" r="2.500"/><circle cx="1047.700" cy="386" r="2.500"/><circle cx="1047.700" cy="444" r="2.500"/><circle cx="806.700" cy="625.700" r="2.500"/><circle cx="865" cy="625.700" r="2.500"/></g>
        <g stroke="#f0f"><circle cx="956.700" cy="386" r="2.500"/><circle cx="956.700" cy="444" r="2.500"/><circle cx="806.700" cy="535" r="2.500"/><circle cx="865" cy="535" r="2.500"/></g>
      </g>
      <g fill="#eee" font-size="19">
        <text x="912" y="340">600</text><text x="739" y="513">600</text><text x="1086" y="422">200</text><text x="958" y="504">400</text><text x="903" y="559">400</text>
      </g>
      <g fill="#eee" font-size="18" font-family="Noto Sans CJK SC"><text x="1113" y="310">全部纵筋</text><text x="1113" y="328">箍筋</text></g>
      <g fill="#00d800" font-size="16.500" font-family="Liberation Mono"><text x="1195" y="309">4C16+8C14</text><text x="1195" y="327">C8@100</text></g>
    </svg>
    <div class="h-[20px] mt-[5px] shrink-0 flex -ml-[5px] -mr-[2px] gap-[3px]">
      <div class="w-[148px] bg-[#f4f4f4] border border-[#ddd] flex items-center pl-[9px] font-['Liberation_Mono'] text-[11px] tracking-[-0.6px] whitespace-pre">(X: 281 Y: 500)</div>
      <div class="flex-1 bg-[#f4f4f4] border border-[#ddd] flex items-center pl-px whitespace-nowrap">请指定起点所在纵筋或网格交点，按右键终止或<span class="font-['Liberation_Mono'] text-[11px] tracking-[-0.6px]">ESC</span>键取消
        <svg class="w-[10px] h-[10px] ml-auto mr-px mt-[6px]" viewBox="0 0 10 10"><path d="M8 1h2v2H8zM4 5h2v2H4zM8 5h2v2H8zM0 8h2v2H0zM4 8h2v2H4zM8 8h2v2H8z" fill="#bbb"/></svg>
      </div>
    </div>
  </div>
</div>

<!-- sogou input bar -->
<div class="absolute left-[1160px] top-[628px] w-[206px] h-[28px] flex items-center">
  <div class="w-[27px] h-[26px] -rotate-6 rounded-[3px] bg-[#ef5a1e] flex items-center justify-center z-10">
    <svg class="w-[18px] h-[16px]" viewBox="0 0 18 16"><path d="M16 3C10 0 3 1 3 4c0 4 12 3 12 7 0 3-7 4-13 2" fill="none" stroke="#fff" stroke-width="3"/></svg>
  </div>
  <div class="flex-1 h-[23px] bg-white border border-[#d0e0f0] flex items-center text-[#1878c8] text-[14px] font-bold">
    <span class="ml-[5px]">英</span>
    <span class="ml-[5px] text-[12px] -mt-1">’,</span>
    <svg class="w-4 h-4 ml-[8px]" viewBox="0 0 16 16"><circle cx="8" cy="8" r="7" fill="none" stroke="#1878c8" stroke-width="1.500"/><circle cx="5.500" cy="6" r="1" fill="#1878c8"/><circle cx="10.500" cy="6" r="1" fill="#1878c8"/><path d="M4.500 10c2 2.500 5 2.500 7 0" fill="none" stroke="#1878c8" stroke-width="1.300"/></svg>
    <svg class="w-[14px] h-4 ml-[7px]" viewBox="0 0 14 16"><rect x="4" y="0" width="6" height="10" rx="3" fill="#1878c8"/><path d="M1 7c0 5 12 5 12 0M7 12v3M4 15h6" fill="none" stroke="#1878c8" stroke-width="1.300"/></svg>
    <svg class="w-4 h-3 ml-[7px]" viewBox="0 0 16 12"><rect width="16" height="12" rx="2" fill="#1878c8"/><path d="M2 3h12M2 6h12M4 9h8" stroke="#fff" stroke-dasharray="1.500 1"/></svg>
    <svg class="w-4 h-4 ml-[11px]" viewBox="0 0 16 16"><circle cx="6" cy="4" r="3" fill="#a9bccd"/><path d="M1 10c1-3 9-3 10 0v5H1z" fill="#a9bccd"/></svg>
    <svg class="w-[15px] h-[14px] ml-[2px]" viewBox="0 0 15 14"><path d="M5 0l2.500 1.500L10 0l5 3-2 3-1-.5V14H3V5.500L2 6 0 3z" fill="#1878c8"/></svg>
    <svg class="w-[15px] h-[15px] ml-[6px]" viewBox="0 0 15 15"><path d="M14 3l-3 3-2-2 3-3C8 0 6 3 7 6L0 12l3 3 6-7c3 1 6-1 5-5z" fill="#1878c8"/></svg>
  </div>
</div>

<script>
  // sim-sun style latin: half-width, one span per ascii run
  function m(s) {
    return s.replace(/[\x21-\x7e]+/g, x => `<span class="font-['Liberation_Mono'] text-[11px] tracking-[-0.6px]">${x}</span>`);
  }

  // navigator tree: [level, icon, label, selected]
  const tree = [
    [2,'beam','梁(L)'],[2,'slab','现浇板(B)'],[1,'fc','轴线'],[1,'fo','柱'],
    [2,'col','框柱(Z)',1],[2,'col','暗柱(Z)'],[2,'col','端柱(Z)'],[2,'gzz','构造柱(Z)'],
    [1,'fo','墙'],[2,'sw','剪力墙(Q)'],[2,'rf','人防门框墙(RF'],[2,'brick','砌体墙(Q)'],[2,'anl','暗梁(A)'],[2,'jj','砌体加筋(Y)'],
    [1,'fo','门窗洞'],[2,'door','门(M)'],[2,'win','窗(C)'],[2,'dlc','门联窗(A)'],[2,'hole','墙洞(D)'],[2,'nic','壁龛(I)'],[2,'ll','连梁(G)'],[2,'gl','过梁(G)'],[2,'bh','带形洞'],[2,'bc','带形窗'],
    [1,'fo','梁'],[2,'beam','梁(L)'],[2,'ql','圈梁(E)'],
    [1,'fo','板'],[2,'slab','现浇板(B)'],[2,'ql','']
  ];
  document.getElementById('tree').innerHTML = tree.map(([lv, ic, label, sel], i) => {
    const next = tree[i + 1];
    const last = !next || next[0] === 1;
    if (lv === 1) {
      const chev = ic === 'fc'
        ? '<path d="M9 4l4 4-4 4" fill="none" stroke="#aaa" stroke-width="2"/>'
        : '<path d="M7 6l4 4 4-4" fill="none" stroke="#555" stroke-width="2"/>';
      return `<div class="h-4 flex items-center"><svg class="w-[44px] h-4 shrink-0" viewBox="0 0 44 16">${chev}<path d="M19 8.500h4" stroke="#777" stroke-dasharray="1 1"/><use href="#${ic}" x="23" y="1" width="16" height="14"/></svg><span>${m(label)}</span></div>`;
    }
    return `<div class="h-4 flex items-center"><svg class="w-[63px] h-4 shrink-0 relative z-10" viewBox="0 0 63 16"><path d="M12.500 0v16" stroke="#777" stroke-dasharray="1 1"/><path d="M31.500 0v${last ? 8 : 16}M32 8.500h10" stroke="#777" stroke-dasharray="1 1"/><use href="#${ic}" x="43" y="0" width="16" height="16"/></svg><span class="${sel ? 'bg-[#d4d4d4] -ml-[23px] pl-[23px] pr-[4px] h-4 flex items-center' : ''}">${m(label)}</span></div>`;
  }).join('');

  // component list
  const kz = ['KZ-29','KZ-30','KZ-31','KZ-32','KZ-33','KZ-34','KZ-36','KZ-37','KZ-39','KZ-40','KZ-42','AZ-34-1','AZ-7-1','AZ-7-1-1','KZ-43','KZ-44','KZ-45','KZ-46','KZ-48','KZ-49','KZ-50','KZ-51','KZ-52','KZ-53','KZ-54','KZ-55','KZ-56','KZ-57','KZ-58','KZ-59','KZ-60','KZ-61','KZ-62','KZ-63'];
  document.getElementById('kz').innerHTML = kz.map((name, i) => {
    const end = i === kz.length - 1;
    return `<div class="h-4 flex items-center"><svg class="w-[38px] h-4 shrink-0" viewBox="0 0 38 16"><path d="M29.500 0v${end ? 8 : 16}M30 8.500h9" stroke="#777" stroke-dasharray="1 1"/></svg><div class="flex items-center h-4 pl-[4px] pr-[4px] ${end ? 'bg-[#2f6bc6]' : ''}"><svg class="w-3 h-3 shrink-0"><use href="#gear"/></svg><span class="ml-[7px] font-['Liberation_Mono'] text-[11px] tracking-[-0.6px] text-[#222]">${name}</span></div></div>`;
  }).join('');

  // property grid: [no, name, value, colour, expandable]
  const props = [
    ['1','名称','KZ-63','blue'],['2','类别','框架柱','blue'],['3','截面编辑','是','blue'],['4','截面形状','异形','black'],
    ['5','截面宽(B边)(mm)','600','gray'],['6','截面高(H边)(mm)','600','sel'],['7','全部纵筋','4 Φ16+8 Φ14','gray'],
    ['8','其它箍筋','','blue'],['9','备注','','black'],
    ['10','芯柱','','gray',1],['15','其它属性','','gray',1],['27','锚固搭接','','gray',1],['42','显示样式','','gray',1]
  ];
  const nameCls = {
    blue: 'text-[#0000ff]', black: 'text-black', gray: 'text-[#808080]', sel: 'bg-[#0078d7] text-white'
  };
  document.getElementById('props').innerHTML =
    `<div class="h-[22px] flex border-b border-[#aaa]">
       <div class="w-[21px] bg-gradient-to-b from-white to-[#ececec] border-r border-[#ccc]"></div>
       <div class="w-[190px] bg-gradient-to-b from-white to-[#ececec] border-r border-[#ccc] flex items-center justify-center text-[13px]">属性名称</div>
       <div class="flex-1 bg-gradient-to-b from-[#fbdc9c] to-[#f4c060] flex items-center justify-center text-[13px] text-[#800080]">属性值</div>
     </div>` +
    props.map(([no, name, val, kind, exp]) => `<div class="h-[19px] flex border-b border-[#b8b8b8]">
       <div class="w-[21px] flex items-center justify-center border-r border-[#ccc] ${kind === 'sel' ? 'bg-[#fdd798] text-[#800080]' : 'bg-gradient-to-b from-white to-[#ececec]'} font-['Liberation_Mono'] text-[11px] tracking-[-0.6px]">${no}</div>
       <div class="w-[190px] flex items-center border-r border-[#ccc] pt-px ${exp ? 'pl-px' : 'pl-[19px]'} ${nameCls[kind]}">${exp ? '<svg class="w-[13px] h-[13px] mr-[5px] shrink-0" viewBox="0 0 13 13"><path d="M.5.500h12v12H.5z" fill="#fff" stroke="#aaa"/><path d="M3 6.500h7M6.500 3v7" stroke="#222"/></svg>' : ''}${m(name)}</div>
       <div class="flex-1 flex items-center pl-[2px] ${kind === 'sel' ? 'bg-[#d8e8f8]' : ''} ${kind === 'gray' ? 'text-[#808080]' : 'text-[#111]'}">${m(val)}</div>
     </div>`).join('');
</script>
</body>
</html>
